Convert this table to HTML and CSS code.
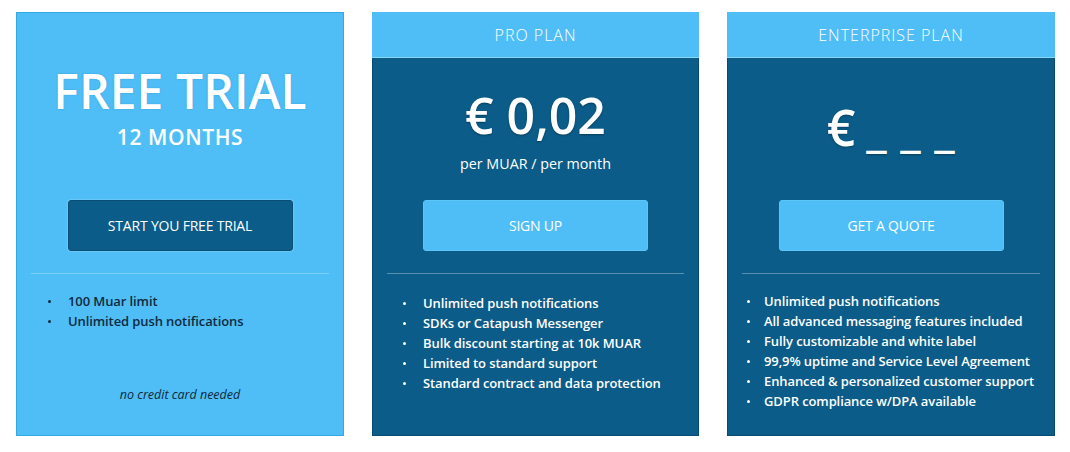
FILE: index.html
```html
<!DOCTYPE html>
<html>
<head>
<meta charset="utf-8">
<link rel="stylesheet" href="styles.css">
</head>
<body>
<div class="plans">
  <div class="card card-free">
    <div class="hero hero-free">
      <div class="free-title">FREE TRIAL</div>
      <div class="free-sub">12 MONTHS</div>
    </div>
    <div class="btn-row"><a class="btn btn-dark">START YOU FREE TRIAL</a></div>
    <div class="divider"></div>
    <ul class="features features-free">
      <li>100 Muar limit</li>
      <li>Unlimited push notifications</li>
    </ul>
    <div class="note">no credit card needed</div>
  </div>

  <div class="card card-pro">
    <div class="card-head">PRO PLAN</div>
    <div class="hero hero-pro">
      <div class="price">€ 0,02</div>
      <div class="per">per MUAR / per month</div>
    </div>
    <div class="btn-row"><a class="btn btn-light">SIGN UP</a></div>
    <div class="divider"></div>
    <ul class="features features-pro">
      <li>Unlimited push notifications</li>
      <li>SDKs or Catapush Messenger</li>
      <li>Bulk discount starting at 10k MUAR</li>
      <li>Limited to standard support</li>
      <li>Standard contract and data protection</li>
    </ul>
  </div>

  <div class="card card-ent">
    <div class="card-head">ENTERPRISE PLAN</div>
    <div class="hero hero-ent">
      <div class="price-ent"><span class="euro">€</span><span class="dashes">_ _ _</span></div>
    </div>
    <div class="btn-row"><a class="btn btn-light">GET A QUOTE</a></div>
    <div class="divider"></div>
    <ul class="features features-ent">
      <li>Unlimited push notifications</li>
      <li>All advanced messaging features included</li>
      <li>Fully customizable and white label</li>
      <li>99,9% uptime and Service Level Agreement</li>
      <li>Enhanced &amp; personalized customer support</li>
      <li>GDPR compliance w/DPA available</li>
    </ul>
  </div>
</div>
</body>
</html>
```

FILE: styles.css
```css
* { box-sizing: border-box; }
html, body { margin: 0; padding: 0; background: #ffffff; }
body {
  font-family: "Open Sans", "Noto Sans", sans-serif;
  width: 1070px;
  height: 452px;
  overflow: hidden;
}
.plans {
  display: flex;
  gap: 28px;
  padding: 12px 0 0 16px;
}
.card {
  width: 328px;
  height: 424px;
  display: flex;
  flex-direction: column;
}
.card-free {
  background: #4fbef6;
  border: 1px solid #33a9e3;
  color: #0f2b40;
}
.card-pro, .card-ent {
  background: #0b5c89;
  border: 1px solid #094a70;
  color: #ffffff;
}
.card-pro { width: 327px; }
.card-head {
  height: 46px;
  background: #4fbef6;
  border-bottom: 1px solid #8ad7fb;
  color: #ffffff;
  font-weight: 300;
  font-size: 16px;
  letter-spacing: 1px;
  display: flex;
  align-items: center;
  justify-content: center;
  margin: -1px -1px 0 -1px;
}
.hero {
  display: flex;
  flex-direction: column;
  align-items: center;
  color: #ffffff;
}
.hero-free { height: 187px; padding-top: 53px; }
.free-title {
  font-size: 48px;
  font-weight: 600;
  line-height: 50px;
  letter-spacing: 0.1px;
  text-shadow: 0 0 2px rgba(40,140,200,0.6);
}
.free-sub {
  font-size: 21px;
  font-weight: 600;
  line-height: 26px;
  letter-spacing: 0.6px;
  margin-top: 8px;
}
.hero-pro, .hero-ent { height: 142px; }
.hero-pro { padding-top: 32px; }
.price {
  font-size: 50px;
  font-weight: 600;
  line-height: 50px;
  text-shadow: 0 1px 2px rgba(0,0,0,0.35);
}
.per {
  font-size: 14.3px;
  font-weight: 400;
  line-height: 20px;
  margin-top: 14px;
}
.hero-ent { padding-top: 44px; }
.price-ent {
  display: flex;
  align-items: baseline;
  text-shadow: 0 1px 2px rgba(0,0,0,0.3);
}
.euro {
  font-size: 50px;
  font-weight: 600;
  line-height: 50px;
}
.dashes {
  font-size: 48px;
  font-weight: 600;
  line-height: 50px;
  margin-left: 11px;
  letter-spacing: 0.6px;
}
.btn-row {
  display: flex;
  justify-content: center;
  height: 73px;
}
.btn {
  width: 225px;
  height: 51px;
  border-radius: 3px;
  display: flex;
  align-items: center;
  justify-content: center;
  font-size: 14px;
  font-weight: 400;
  color: #ffffff;
  letter-spacing: -0.2px;
}
.btn-dark {
  background: #0b5c89;
  border: 1px solid #0a4e76;
  box-shadow: 0 0 2px rgba(255,255,255,0.5);
}
.btn-light {
  background: #4fbef6;
  border: 1px solid #5cc6f8;
}
.divider {
  height: 1px;
  margin: 0 14px;
}
.card-free .divider { background: #7ad0f8; }
.card-pro .divider, .card-ent .divider { background: #5a8fb0; }
.features {
  list-style: none;
  margin: 0;
  padding: 16px 0 0 0;
  font-size: 13px;
  font-weight: 600;
  line-height: 20px;
  letter-spacing: -0.1px;
}
.features li { position: relative; }
.features li::before {
  content: "";
  position: absolute;
  left: -20px;
  top: 9px;
  width: 3px;
  height: 3px;
  background: currentColor;
  border-radius: 50%;
}
.features-free { padding-left: 51px; padding-top: 17px; }
.features-pro { padding-left: 50px; padding-top: 19px; }
.features-ent { padding-left: 36px; padding-top: 17px; }
.features-ent li::before { left: -17px; }
.note {
  margin-top: 55px;
  text-align: center;
  font-size: 12.5px;
  font-style: italic;
  font-weight: 400;
  color: #10283a;
}
```
